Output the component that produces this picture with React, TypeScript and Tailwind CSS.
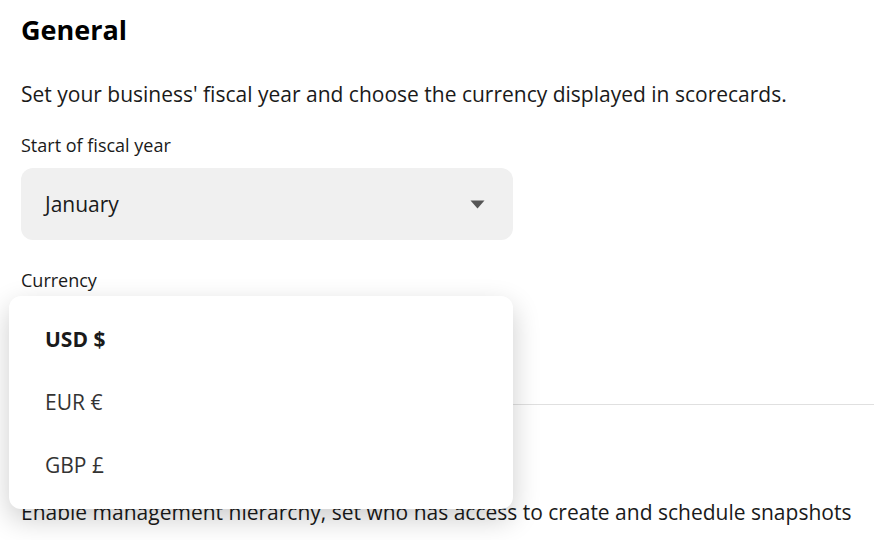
import React from "react";

export default function App() {
  return (
    <div
      className="w-[874px] h-[540px] overflow-hidden bg-white text-[#1a1a1a]"
      style={{ fontFamily: '"Open Sans", "Noto Sans", sans-serif' }}
    >
      <div className="pl-[21px] pt-[12px]">
        <h1 className="text-[27px] leading-[36px] font-bold text-black">General</h1>
        <p className="mt-[32px] text-[21px] leading-[28px] text-[#1a1a1a]">
          Set your business' fiscal year and choose the currency displayed in scorecards.
        </p>
        <div className="mt-[25px] text-[18px] leading-[24px] text-[#1a1a1a]">Start of fiscal year</div>
        <div className="mt-[11px] w-[492px] h-[72px] rounded-[12px] bg-[#f0f0f0] flex items-center justify-between pl-[24px] pr-[28px]">
          <span className="text-[21px] text-[#1a1a1a] translate-y-[1px]">January</span>
          <svg width="15" height="9" viewBox="0 0 15 9">
            <path d="M0.5 0.5 L14.5 0.5 L7.5 8.5 Z" fill="#555" />
          </svg>
        </div>
        <div className="relative mt-[28px]">
          <div className="text-[18px] leading-[24px] text-[#1a1a1a]">Currency</div>
          <div className="mt-[11px] w-[492px] h-[72px] rounded-[12px] bg-[#f0f0f0] flex items-center pl-[24px]">
            <span className="text-[21px]">USD $</span>
          </div>
          <div className="absolute left-[-12px] top-[28px] w-[504px] rounded-[12px] bg-white py-[12px] shadow-[0_10px_28px_rgba(0,0,0,0.2)] z-10">
            <div className="h-[63px] flex items-center pl-[36px] text-[21px] font-bold text-[#1a1a1a]">USD $</div>
            <div className="h-[63px] flex items-center pl-[36px] text-[21px] text-[#333]">EUR €</div>
            <div className="h-[63px] flex items-center pl-[36px] text-[21px] text-[#333]">GBP £</div>
          </div>
        </div>
        <div className="mt-[29px] h-px bg-[#e0e0e0]" />
        <div className="mt-[38px] h-[36px]" />
        <p className="mt-[19px] text-[21px] leading-[28px] text-[#1a1a1a]">
          Enable management hierarchy, set who has access to create and schedule snapshots
        </p>
      </div>
    </div>
  );
}
